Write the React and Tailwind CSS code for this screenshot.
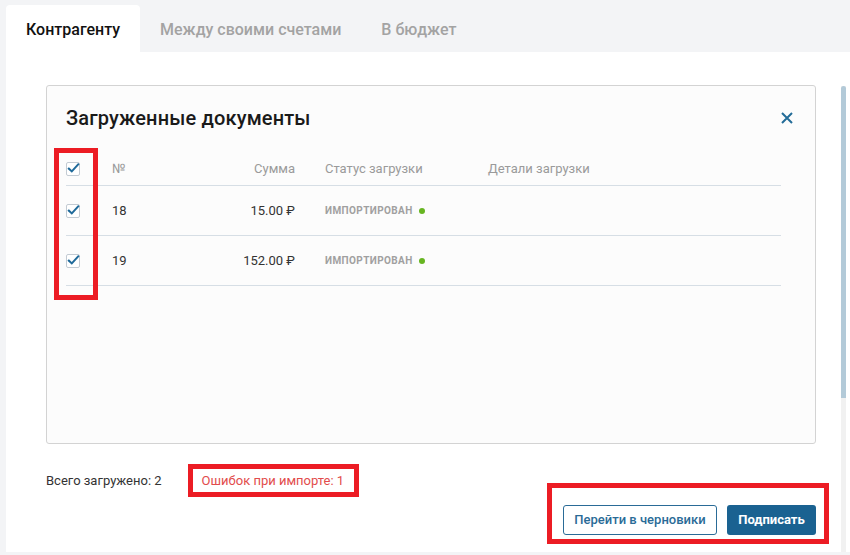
import React from 'react';

const rows = [
  { id: 18, sum: '15.00 ₽', status: 'Импортирован' },
  { id: 19, sum: '152.00 ₽', status: 'Импортирован' },
];

const Check = () => (
  <span className="relative block w-[14px] h-[14px] border border-[#c3cbd3] rounded-[2px] bg-white">
    <svg className="absolute -left-px -top-[2px] overflow-visible" width="14" height="14" viewBox="0 0 14 14" fill="none">
      <path d="M2.8 7.6 L5.8 10.4 L12.2 3.4" stroke="#1f6a9a" strokeWidth="2" strokeLinecap="square" />
    </svg>
  </span>
);

const App = () => {
  return (
    <div className="relative w-[850px] h-[555px] overflow-hidden bg-[#f3f4f6] font-['Roboto','Liberation_Sans',sans-serif]">
      {/* tabs */}
      <div className="flex h-[52px] pl-[6px] pt-[5px] text-[16px] font-medium">
        <div className="flex items-center h-[47px] pt-[2px] px-5 bg-white rounded-t-[4px] text-[#111]">Контрагенту</div>
        <div className="flex items-center h-[47px] pt-[2px] px-5 text-[#a3a3a3]">Между своими счетами</div>
        <div className="flex items-center h-[47px] pt-[2px] px-5 text-[#a3a3a3]">В бюджет</div>
      </div>

      <div className="flex ml-[6px] h-[500px] bg-white">
        <div className="w-[835px] pl-[40px] pt-[33px]">
          {/* card */}
          <div className="w-[770px] h-[359px] border border-[#d3d3d3] rounded-[3px] bg-[#fcfcfc] pl-[19px] pr-[22px] pt-[20px]">
            <div className="flex items-center justify-between h-[24px]">
              <h2 className="text-[20px] font-medium tracking-[0.15px] text-[#1a1a1a] leading-[24px]">Загруженные документы</h2>
              <svg width="12" height="12" viewBox="0 0 12 12" fill="none">
                <path d="M1 1 L11 11 M11 1 L1 11" stroke="#236c98" strokeWidth="2" />
              </svg>
            </div>

            <div className="mt-[23px] mr-[12px] text-[13px]">
              <div className="flex items-center h-[33px] border-b border-[#d6dee5] text-[#9a9a9a]">
                <div className="w-[46px]"><Check /></div>
                <div className="w-[80px]">№</div>
                <div className="w-[103px] text-right">Сумма</div>
                <div className="w-[30px]" />
                <div className="w-[163px]">Статус загрузки</div>
                <div>Детали загрузки</div>
              </div>
              {rows.map(r => (
                <div key={r.id} className="flex items-center h-[50px] border-b border-[#d6dee5] text-[#333]">
                  <div className="w-[46px]"><Check /></div>
                  <div className="w-[80px]">{r.id}</div>
                  <div className="w-[103px] text-right">{r.sum}</div>
                  <div className="w-[30px]" />
                  <div className="w-[163px] flex items-center gap-[6px]">
                    <span className="text-[10px] font-bold uppercase tracking-[0.4px] text-[#a0a0a0]">{r.status}</span>
                    <span className="w-[6px] h-[6px] rounded-full bg-[#67b521]" />
                  </div>
                  <div />
                </div>
              ))}
            </div>
          </div>

          {/* footer */}
          <div className="flex items-center mt-[29px] h-[16px] text-[13px]">
            <span className="text-[#333]">Всего загружено: 2</span>
            <span className="ml-[40px] text-[#e24c4c]">Ошибок при импорте: 1</span>
          </div>
          <div className="flex justify-end gap-[10px] w-[770px] mt-[16px]">
            <button className="h-[30px] w-[154px] border border-[#2a6b97] rounded-[3px] bg-white text-[13px] font-medium text-[#2a6b97]">
              Перейти в черновики
            </button>
            <button className="h-[30px] w-[89px] rounded-[3px] bg-[#1a6291] text-[13px] font-bold text-white">
              Подписать
            </button>
          </div>
        </div>

        {/* scrollbar */}
        <div className="w-[5px] mt-[34px] flex flex-col bg-[#f1f1f1]">
          <div className="h-[312px] bg-[#b3cad8] rounded-t-[3px]" />
        </div>
      </div>

      {/* annotation boxes */}
      <div className="absolute left-[54px] top-[148px] w-[44px] h-[152px] border-[5px] border-[#ec1c24]" />
      <div className="absolute left-[188px] top-[464px] w-[171px] h-[33px] border-[5px] border-[#ec1c24]" />
      <div className="absolute left-[547px] top-[483px] w-[282px] h-[61px] border-[5px] border-[#ec1c24]" />
    </div>
  );
};

export default App;
